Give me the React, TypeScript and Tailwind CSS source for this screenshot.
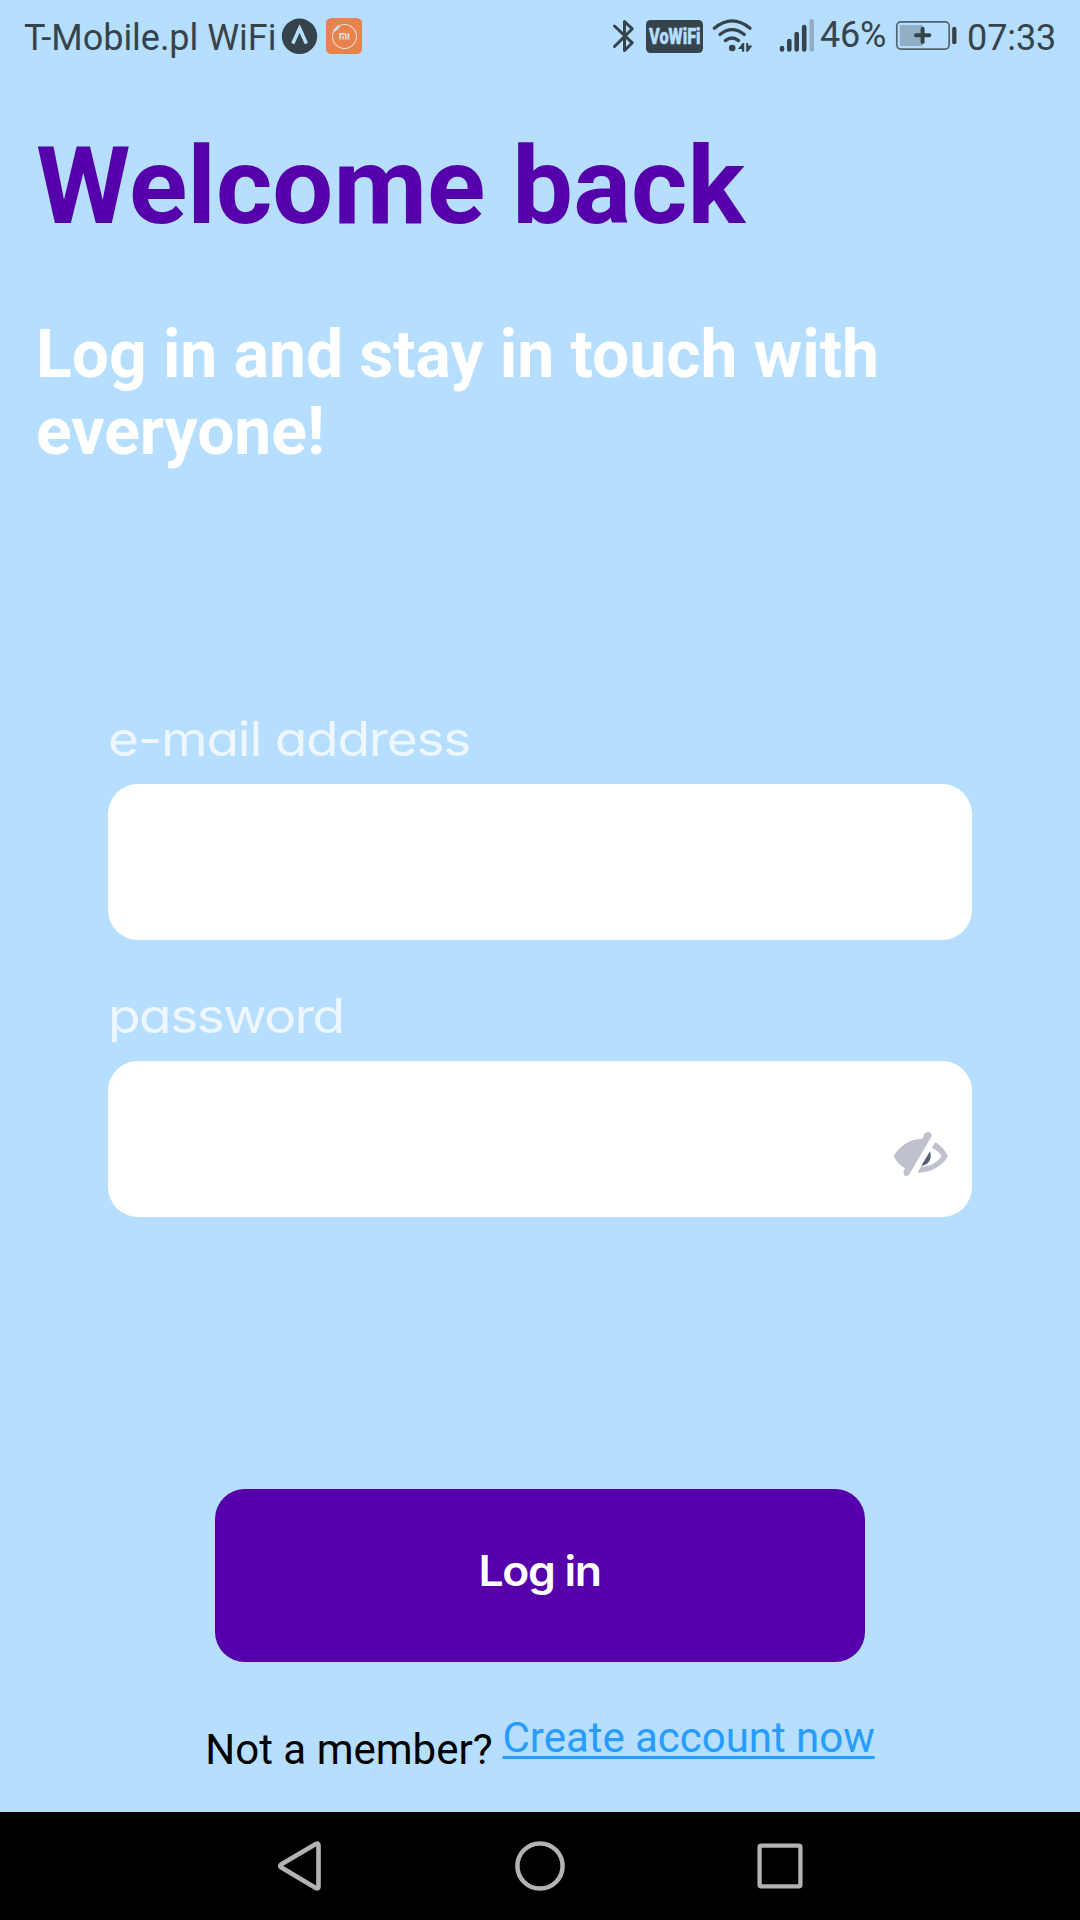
import React from "react";

function NotificationIcons() {
  return (
    <svg className="h-[72px] w-[90px] shrink-0" viewBox="280 0 90 72" fill="none">
      <circle cx="299.5" cy="36.3" r="17.7" fill="#37434b" />
      <path d="M292.8 43.6 299.6 28.6 306.4 43.6" stroke="#b5deff" strokeWidth="3.6" />
      <path d="M298 28h3.2l2.6 6.2h-2.4l-1.8-2-1.8 2h-2.4z" fill="#b5deff" />
      <rect x="326" y="18" width="36" height="36" rx="5.5" fill="#ea824d" />
      <circle cx="344.5" cy="36.5" r="12" stroke="#f1dbd0" strokeWidth="1.1" />
      <path d="M334.8 30.2 338.4 26.8" stroke="#c9e2f7" strokeWidth="2.6" strokeLinecap="round" />
      <path d="M340 39.6v-5.8h4q1.8 0 1.8 1.8v4M343 36v3.6M348.4 33.2v6.4" stroke="#e0dfe0" strokeWidth="1.7" />
    </svg>
  );
}

function ConnectivityIcons() {
  return (
    <svg className="h-[72px] w-[216px] shrink-0" viewBox="604 0 216 72" fill="none" stroke="#37434b">
      <path d="M614.5 26 632.3 42.8 624.5 50.5V21.5L632.3 28.8 614.5 46.5" strokeWidth="3" strokeLinecap="round" strokeLinejoin="round" />
      <rect x="646" y="20" width="57" height="33" rx="4.5" fill="#37434b" stroke="none" />
      <text x="649" y="44" textLength="51.5" lengthAdjust="spacingAndGlyphs" fill="#b5deff" stroke="#b5deff" strokeWidth="0.5" fontFamily="Roboto, sans-serif" fontWeight="900" fontSize="22">VoWiFi</text>
      <g strokeWidth="3.3" strokeLinecap="round">
        <path d="M714.3 28.2Q732 13.6 750 28.2" />
        <path d="M720 34.5Q732 24.8 744.3 34.5" />
        <path d="M725.3 40.6Q732 35.4 738.6 40.6" />
      </g>
      <circle cx="732.2" cy="48" r="3.3" fill="#37434b" stroke="none" />
      <path d="M738 49 742.6 43H744.2v8.8h-2.2V49zM746.2 43h2v2.6h4.2l-4.4 6.2h-1.8z" fill="#37434b" stroke="none" />
      <g strokeWidth="4.6" strokeLinecap="round">
        <path d="M782 48v1.5M789.3 41v8.5M796.7 34v15.5M804.2 27v22.5" />
        <path d="M811.7 21.3v28.2" stroke="#91aec5" />
      </g>
    </svg>
  );
}

function BatteryIcon() {
  return (
    <svg className="h-[72px] w-[66px] shrink-0" viewBox="892 0 66 72" fill="none">
      <rect x="896.8" y="21.9" width="52.4" height="27.2" rx="4" stroke="#52646f" strokeWidth="1.7" />
      <rect x="899.8" y="25" width="23" height="21" rx="1" fill="#91aec5" />
      <path d="M916 35.3h13.3M922.6 28.7V42" stroke="#37434b" strokeWidth="4" strokeLinecap="round" />
      <path d="M954.3 28.8v13.4" stroke="#37434b" strokeWidth="4.3" strokeLinecap="round" />
    </svg>
  );
}

function StatusBar() {
  return (
    <header className="flex h-[72px] w-full items-start text-[36px] leading-[44px] whitespace-nowrap text-[#37434b]">
      <span className="mt-4 ml-6 w-[256px] tracking-[-0.03px]">T-Mobile.pl WiFi</span>
      <NotificationIcons />
      <div className="ml-auto flex items-start">
        <ConnectivityIcons />
        <span className="mt-[13px] w-[72px] tracking-[-0.2px]">46%</span>
        <BatteryIcon />
        <span className="mt-4 ml-[9px] w-[113px] tracking-[-0.1px]">07:33</span>
      </div>
    </header>
  );
}

function HiddenEye() {
  return (
    <svg className="ml-auto h-[46px] w-[56px]" viewBox="100 92 168 138" fill="none">
      <path d="M102 167C118 139 151 115 187 116L191 109Q193 96 205 95Q216 96 216 107L149 222Q145 229 137 227Q130 223 132 212L136 204C122 196 110 184 102 167Z" fill="#c0c1cf" />
      <path d="M227 126C242 134 256 149 265 167C250 195 213 219 173 217L184 198C211 200 233 186 246 167C239 156 229 147 216 143Z" fill="#c0c1cf" />
      <path d="M211 153C218 174 208 195 185 196Z" fill="#555c7c" />
    </svg>
  );
}

function Field({ label, type, children }: { label: React.ReactNode; type: string; children?: React.ReactNode }) {
  return (
    <label className="block">
      <span className="block h-[72px] text-[48px] leading-[72px] whitespace-nowrap text-[#eef7ff] [font-family:Inter,sans-serif] [font-feature-settings:'cv11'_1] [font-weight:370]">
        {label}
      </span>
      <span className="mt-[9px] flex h-[156px] items-center rounded-[30px] bg-white pr-[23px] pl-8">
        <input type={type} className="h-full min-w-0 flex-1 bg-transparent text-[42px] outline-none" />
        {children}
      </span>
    </label>
  );
}

function NavigationBar() {
  return (
    <nav className="flex h-[108px] w-full items-center justify-center gap-[186px] bg-black">
      <svg className="h-[54px] w-[54px]" viewBox="273 1839 54 54" fill="none" stroke="#b3b3b3" strokeWidth="4.6" strokeLinejoin="round">
        <path d="M281 1864.4Q279.7 1865.9 281 1867.3L315.8 1888Q318.5 1889 318.5 1886.7V1845Q318.5 1842.8 315.8 1844Z" />
      </svg>
      <svg className="h-[54px] w-[54px]" viewBox="0 0 54 54" fill="none">
        <circle cx="27" cy="27" r="22.6" stroke="#b3b3b3" strokeWidth="4.5" />
      </svg>
      <svg className="h-[54px] w-[54px]" viewBox="0 0 54 54" fill="none">
        <rect x="6.6" y="6.6" width="40.8" height="40.8" rx="1.6" stroke="#b3b3b3" strokeWidth="4.3" />
      </svg>
    </nav>
  );
}

export default function App() {
  return (
    <div className="flex h-[1920px] w-[1080px] flex-col overflow-hidden bg-[#b5deff] [font-family:Roboto,sans-serif]">
      <StatusBar />
      <main className="flex flex-1 flex-col">
        <h1 className="mt-[51px] ml-9 h-[126px] text-[108px] leading-[126px] font-bold tracking-[0.08px] whitespace-nowrap text-[#5500ab]">Welcome back</h1>
        <h2 className="mt-[67px] ml-9 h-[154px] text-[66px] leading-[77px] font-bold tracking-[-0.04px] whitespace-nowrap text-white">
          Log in and stay in touch with
          <br />
          everyone!
        </h2>
        <form className="mt-[233px] flex flex-col items-stretch px-[108px]">
          <Field type="email" label={<span className="inline-block origin-left scale-x-[1.11] tracking-[-1.15px]">e-mail address</span>} />
          <div className="mt-10">
            <Field type="password" label={<span className="inline-block origin-left scale-x-[1.11] tracking-[-1.4px]">password</span>}>
              <span className="mt-[30px]"><HiddenEye /></span>
            </Field>
          </div>
          <button type="button" className="mt-[272px] flex h-[173px] w-[650px] items-center justify-center self-center rounded-[30px] bg-[#5500ab] text-[42px] font-semibold text-white [font-family:Inter,sans-serif] [font-feature-settings:'cv11'_1]">
            <span className="-mt-[10px] inline-block scale-x-[1.06] leading-[60px] tracking-[-1.3px]">Log in</span>
          </button>
        </form>
        <div className="mt-[51px] flex items-start justify-center text-[42px] leading-[50px] whitespace-nowrap">
          <span className="mt-3 mr-[10px] text-black">Not a member?</span>
          <a className="tracking-[-0.03px] text-[#279cff] underline decoration-3 underline-offset-[4px] [text-decoration-skip-ink:none]">Create account now</a>
        </div>
      </main>
      <NavigationBar />
    </div>
  );
}
